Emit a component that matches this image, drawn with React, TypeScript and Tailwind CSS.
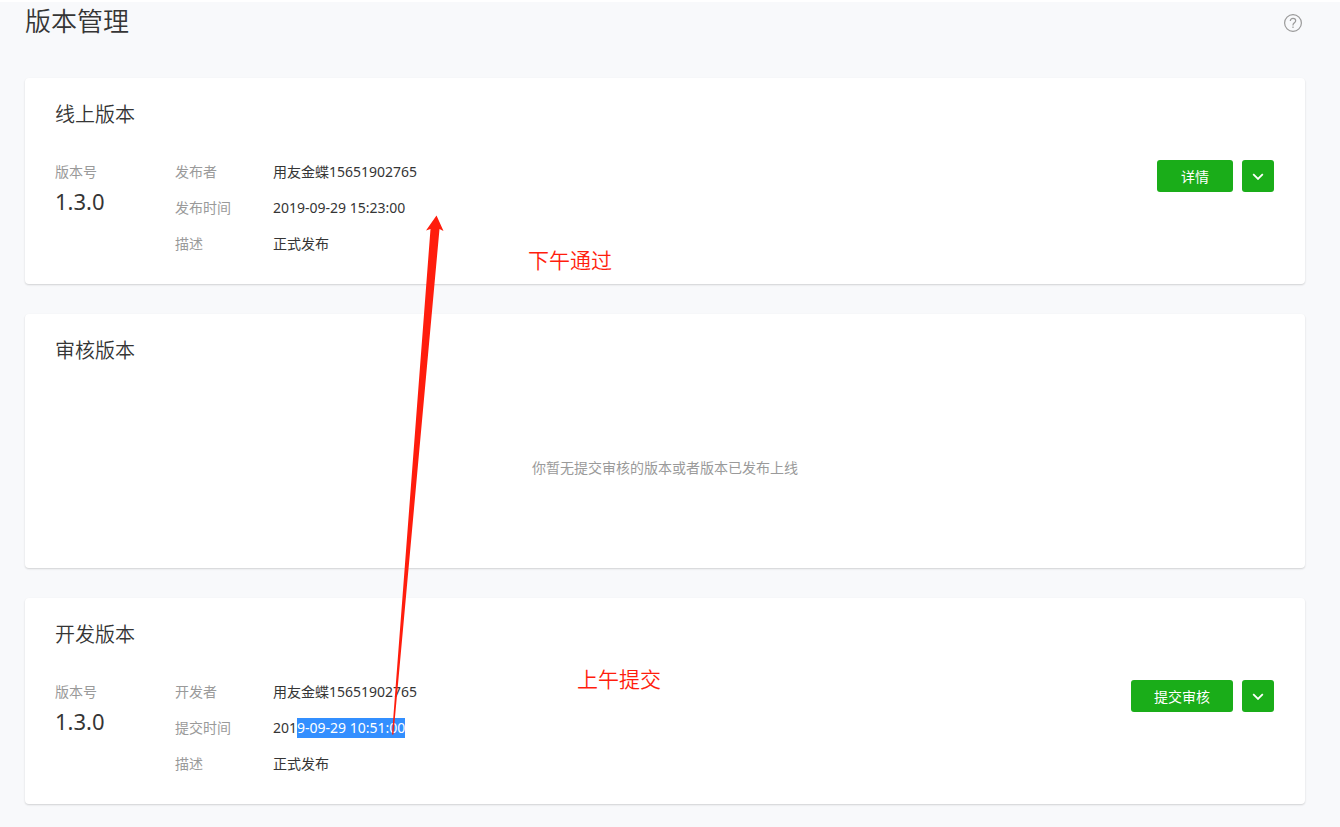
import type { ReactNode } from 'react';

interface Field {
  label: string;
  value: ReactNode;
}

interface VersionCardProps {
  title: string;
  version: string;
  fields: Field[];
  action: string;
}

function CardShell({ title, children }: { title: string; children: ReactNode }) {
  return (
    <section className="rounded bg-white px-[30px] pt-[21px] shadow-[0_1px_2px_rgba(0,0,0,0.16)]">
      <h2 className="text-xl leading-8 font-[350]">{title}</h2>
      {children}
    </section>
  );
}

function VersionCard({ title, version, fields, action }: VersionCardProps) {
  return (
    <CardShell title={title}>
      <div className="flex items-start pt-[23px] pb-[22px]">
        <dl className="w-[120px] shrink-0">
          <dt className="leading-9 text-[#9a9a9a]">版本号</dt>
          <dd className="text-[22px] leading-[22px]">{version}</dd>
        </dl>

        <dl className="grid flex-1 grid-cols-[98px_1fr] leading-9">
          {fields.map((field) => (
            <div key={field.label} className="contents">
              <dt className="text-[#9a9a9a]">{field.label}</dt>
              <dd>{field.value}</dd>
            </div>
          ))}
        </dl>

        <div className="flex gap-[9px] pt-1.5 pr-px">
          <button
            type="button"
            className="h-8 min-w-[76px] rounded-[3px] bg-[#1aad19] px-[23px] pt-0.5 text-white hover:bg-[#179b16]"
          >
            {action}
          </button>
          <button
            type="button"
            aria-label="更多操作"
            className="flex size-8 items-center justify-center rounded-[3px] bg-[#1aad19] text-white hover:bg-[#179b16]"
          >
            <svg width="12" height="8" viewBox="0 0 12 8" fill="none" stroke="currentColor" strokeWidth="1.8">
              <path d="M1.200 2.200 6 6.900l4.800-4.700" />
            </svg>
          </button>
        </div>
      </div>
    </CardShell>
  );
}

export default function App() {
  return (
    <div className="relative min-h-screen border-t-2 border-white bg-[#f8f9fb] pr-[35px] pb-6 pl-[25px] font-['Noto_Sans','Noto_Sans_CJK_SC',sans-serif] text-sm text-[#353535]">
      <header className="flex items-start justify-between pr-[3px]">
        <h1 className="text-[26px] leading-[38px] font-[350]">版本管理</h1>
        <button type="button" aria-label="帮助" className="mt-3 text-[#9a9a9a]">
          <svg width="18" height="18" viewBox="0 0 18 18" fill="none" stroke="currentColor" strokeWidth="1.2">
            <circle cx="9" cy="9" r="8.4" />
            <path d="M6.300 7.100c0-1.700 1.100-2.800 2.700-2.800s2.700 1 2.700 2.400c0 1.900-2.700 2.200-2.700 4.300v.4" />
            <path d="M9 12.500v1.400" />
          </svg>
        </button>
      </header>

      <main className="flex flex-col gap-[30px] pt-[38px]">
        <VersionCard
          title="线上版本"
          version="1.3.0"
          action="详情"
          fields={[
            { label: '发布者', value: '用友金蝶15651902765' },
            { label: '发布时间', value: '2019-09-29 15:23:00' },
            { label: '描述', value: '正式发布' },
          ]}
        />

        <CardShell title="审核版本">
          <p className="pt-[91px] pb-[90px] text-center leading-5 text-[#9a9a9a]">
            你暂无提交审核的版本或者版本已发布上线
          </p>
        </CardShell>

        <VersionCard
          title="开发版本"
          version="1.3.0"
          action="提交审核"
          fields={[
            { label: '开发者', value: '用友金蝶15651902765' },
            {
              label: '提交时间',
              value: (
                <>
                  201
                  <mark className="inline-block bg-[#338fff] leading-5 text-white">
                    9-09-29 10:51:00
                  </mark>
                </>
              ),
            },
            { label: '描述', value: '正式发布' },
          ]}
        />
      </main>

      {/* Red notes drawn over the page */}
      <div className="pointer-events-none absolute inset-0 text-[21px] leading-8 font-[350] text-[#ff1d0d]">
        <svg
          className="absolute top-[213px] left-[390px]"
          width="56"
          height="524"
          viewBox="0 0 56 524"
          fill="currentColor"
        >
          <path d="M46.500 0.500 53.500 16 49.500 14 3.400 519.500 2 519.500 40.500 14 36 15.500Z" />
        </svg>
        <span className="absolute top-[242px] left-[528px]">下午通过</span>
        <span className="absolute top-[661px] left-[577px]">上午提交</span>
      </div>
    </div>
  );
}
